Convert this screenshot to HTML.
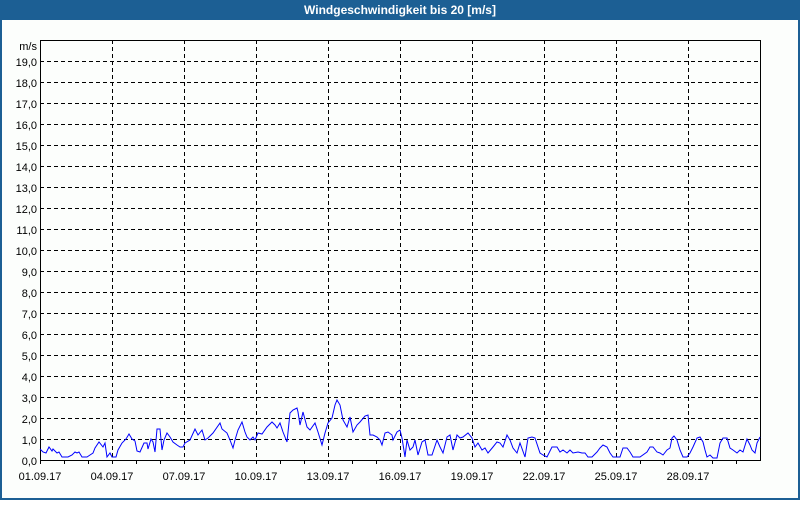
<!DOCTYPE html>
<html><head><meta charset="utf-8"><style>
body{margin:0;width:800px;height:500px;overflow:hidden;background:#fff}
</style></head><body>
<svg width="800" height="500" xmlns="http://www.w3.org/2000/svg" font-family="Liberation Sans, sans-serif">
<rect x="0" y="0" width="800" height="500" fill="#1c5f94"/>
<rect x="2" y="20" width="796" height="478" fill="#fcfefc"/>
<text x="400" y="14" fill="#fff" font-size="12" font-weight="bold" text-anchor="middle">Windgeschwindigkeit bis 20 [m/s]</text>
<g stroke="#000" stroke-width="1" stroke-dasharray="4,3" shape-rendering="crispEdges">
<path d="M40 439.5H760M40 418.5H760M40 397.5H760M40 376.5H760M40 355.5H760M40 334.5H760M40 313.5H760M40 292.5H760M40 271.5H760M40 250.5H760M40 229.5H760M40 208.5H760M40 187.5H760M40 166.5H760M40 145.5H760M40 124.5H760M40 103.5H760M40 82.5H760M40 61.5H760"/>
<path d="M112.5 40V460M184.5 40V460M256.5 40V460M328.5 40V460M400.5 40V460M472.5 40V460M544.5 40V460M616.5 40V460M688.5 40V460"/>
</g>
<rect x="40.5" y="40.5" width="720" height="420" fill="none" stroke="#000" shape-rendering="crispEdges"/>
<g stroke="#000" shape-rendering="crispEdges">
<path d="M40.5 460V464M64.5 460V464M88.5 460V464M112.5 460V464M136.5 460V464M160.5 460V464M184.5 460V464M208.5 460V464M232.5 460V464M256.5 460V464M280.5 460V464M304.5 460V464M328.5 460V464M352.5 460V464M376.5 460V464M400.5 460V464M424.5 460V464M448.5 460V464M472.5 460V464M496.5 460V464M520.5 460V464M544.5 460V464M568.5 460V464M592.5 460V464M616.5 460V464M640.5 460V464M664.5 460V464M688.5 460V464M712.5 460V464M736.5 460V464"/>
</g>
<g font-size="11" fill="#000" text-anchor="end">
<text x="37" y="50">m/s</text>
<text x="37" y="465">0,0</text><text x="37" y="444">1,0</text><text x="37" y="423">2,0</text><text x="37" y="402">3,0</text><text x="37" y="381">4,0</text><text x="37" y="360">5,0</text><text x="37" y="339">6,0</text><text x="37" y="318">7,0</text><text x="37" y="297">8,0</text><text x="37" y="276">9,0</text><text x="37" y="255">10,0</text><text x="37" y="234">11,0</text><text x="37" y="213">12,0</text><text x="37" y="192">13,0</text><text x="37" y="171">14,0</text><text x="37" y="150">15,0</text><text x="37" y="129">16,0</text><text x="37" y="108">17,0</text><text x="37" y="87">18,0</text><text x="37" y="66">19,0</text>
</g>
<g font-size="11" fill="#000" text-anchor="middle">
<text x="40" y="480">01.09.17</text><text x="112" y="480">04.09.17</text><text x="184" y="480">07.09.17</text><text x="256" y="480">10.09.17</text><text x="328" y="480">13.09.17</text><text x="400" y="480">16.09.17</text><text x="472" y="480">19.09.17</text><text x="544" y="480">22.09.17</text><text x="616" y="480">25.09.17</text><text x="688" y="480">28.09.17</text>
</g>
<polyline fill="none" stroke="#0000ff" stroke-width="1" points="40,449 43,452 46,453 49,447 52,451 53,449 57,453 59,452 62,457 65,457 68,457 72,455 75,452 77,453 79,452 82,457 85,457 87,457 90,455 93,453 95,448 99,442 103,447 105,443 107,457 110,453 112,457 116,457 118,450 122,443 126,439 129,434 132,439 135,441 137,451 140,452 144,443 147,443 148,449 151,439 153,442 155,452 157,429 160,429 162,450 164,440 167,433 170,437 173,442 177,445 180,447 183,447 185,443 190,440 195,429 198,435 202,430 205,440 208,438 213,433 220,423 222,429 227,433 230,440 233,448 235,440 238,430 242,422 245,432 247,437 250,440 253,437 255,440 258,433 262,434 267,427 272,422 275,425 277,428 280,423 283,432 287,442 290,413 293,410 297,408 298,412 300,425 303,412 307,427 310,430 315,423 318,432 322,445 325,433 328,423 332,418 335,405 337,400 340,405 343,420 347,427 350,417 353,432 357,425 360,422 365,416 368,415 370,435 373,435 377,437 380,440 382,445 385,433 388,432 392,435 393,440 397,432 400,430 402,438 405,457 407,440 410,450 413,447 415,440 418,455 422,442 425,440 428,455 432,455 437,440 440,447 443,453 447,437 450,435 453,450 457,435 460,438 463,437 468,433 472,438 475,447 478,443 482,450 485,448 488,453 493,447 497,442 500,443 503,447 507,435 510,440 513,448 517,453 520,443 525,457 528,438 532,437 535,438 540,453 543,455 547,457 552,447 557,447 560,452 563,450 567,453 570,450 573,453 578,452 582,453 585,453 588,457 592,457 597,452 600,448 603,445 607,447 610,453 613,457 620,457 623,448 627,448 630,452 633,457 640,457 647,452 650,447 653,447 657,452 660,453 663,455 667,450 670,448 672,438 674,436 677,440 680,450 683,457 687,457 690,453 693,447 697,438 700,437 703,442 705,450 707,457 710,455 713,458 717,458 720,443 723,438 727,438 730,448 733,450 737,453 740,450 743,452 747,439 750,445 752,450 755,453 757,443 760,437"/>
</svg>
</body></html>
